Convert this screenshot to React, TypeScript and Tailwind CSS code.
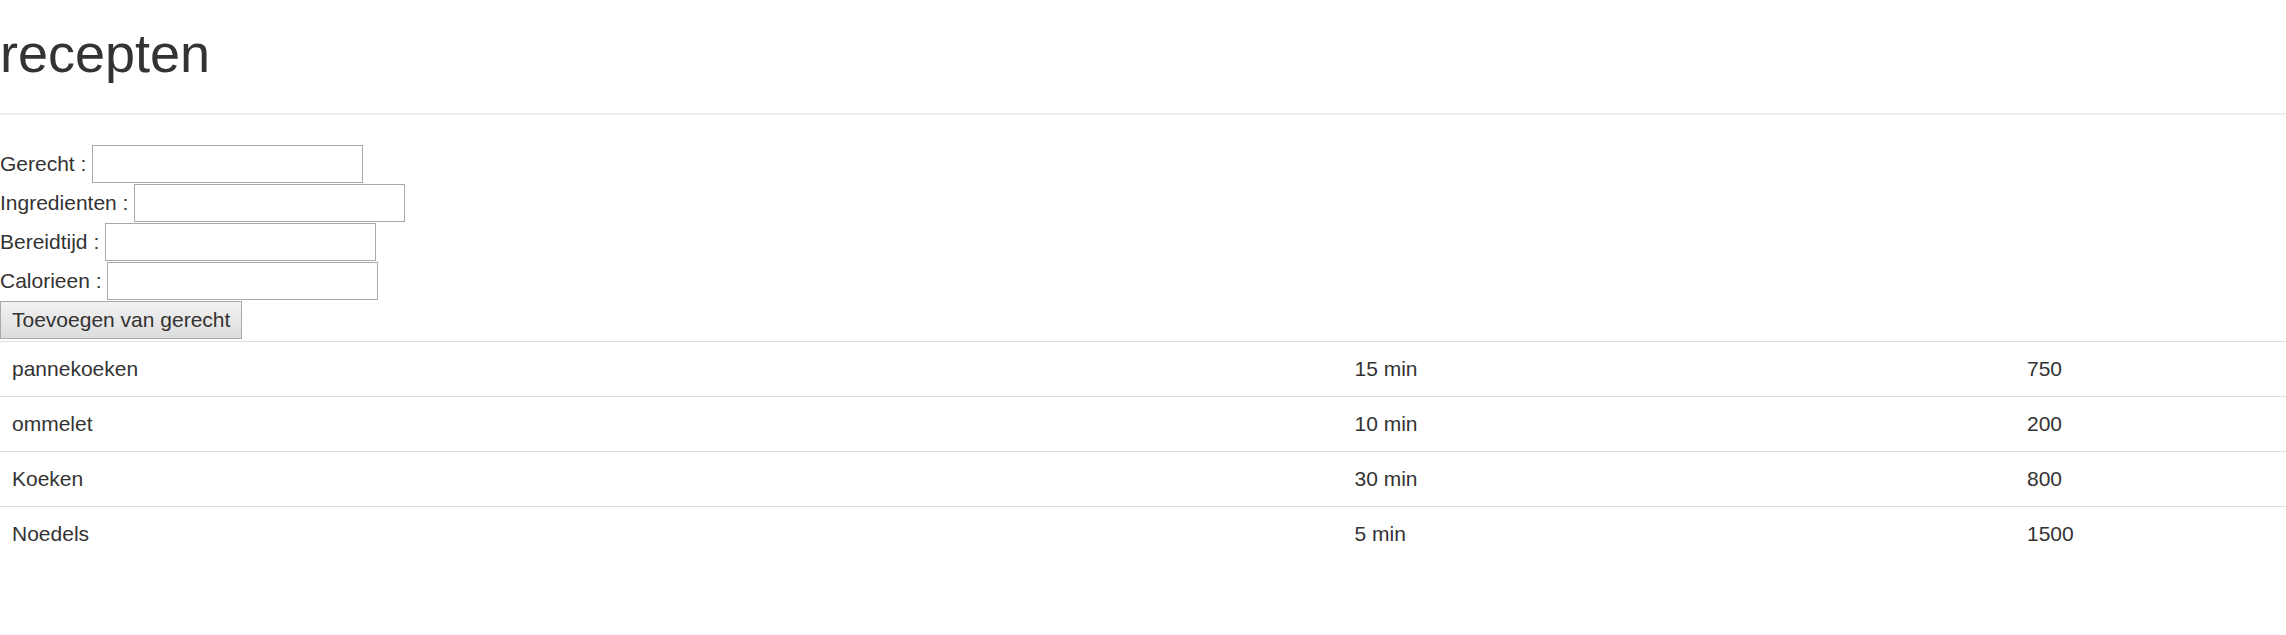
import React from "react";

const rows = [
  ["pannekoeken", "15 min", "750"],
  ["ommelet", "10 min", "200"],
  ["Koeken", "30 min", "800"],
  ["Noedels", "5 min", "1500"],
];

const fields = ["Gerecht", "Ingredienten", "Bereidtijd", "Calorieen"];

export default function App() {
  return (
    <div className="w-[2286px] min-h-[635px] bg-white text-[#333333] font-['Liberation_Sans',Arial,sans-serif] text-[21px] leading-[30px]">
      <h1 className="pt-[24px] text-[54px] leading-[59.4px] font-normal">recepten</h1>
      <div className="mt-[30px] border-t-2 border-[#eeeeee]" />
      <form className="mt-[30px] flex flex-col" onSubmit={(e) => e.preventDefault()}>
        {fields.map((f) => (
          <div key={f} className="flex items-center h-[38px] mb-[1px]">
            <label className="whitespace-pre">{f} : </label>
            <input
              type="text"
              className="w-[271px] h-[38px] border border-[#a9a9a9] bg-white px-[3px] outline-none"
            />
          </div>
        ))}
        <div>
          <button
            type="submit"
            className="h-[38px] px-[11px] border border-[#a9a9a9] bg-gradient-to-b from-[#f2f2f2] to-[#dddddd] text-[21px] leading-[30px] text-[#333333]"
          >
            Toevoegen van gerecht
          </button>
        </div>
      </form>
      <div className="mt-[2px]">
        {rows.map((r) => (
          <div
            key={r[0]}
            className="grid grid-cols-[1342.5px_672.5px_1fr] border-t border-[#dddddd]"
          >
            {r.map((c, i) => (
              <div key={i} className="py-[12px] px-[12px] leading-[30px]">
                {c}
              </div>
            ))}
          </div>
        ))}
      </div>
    </div>
  );
}
